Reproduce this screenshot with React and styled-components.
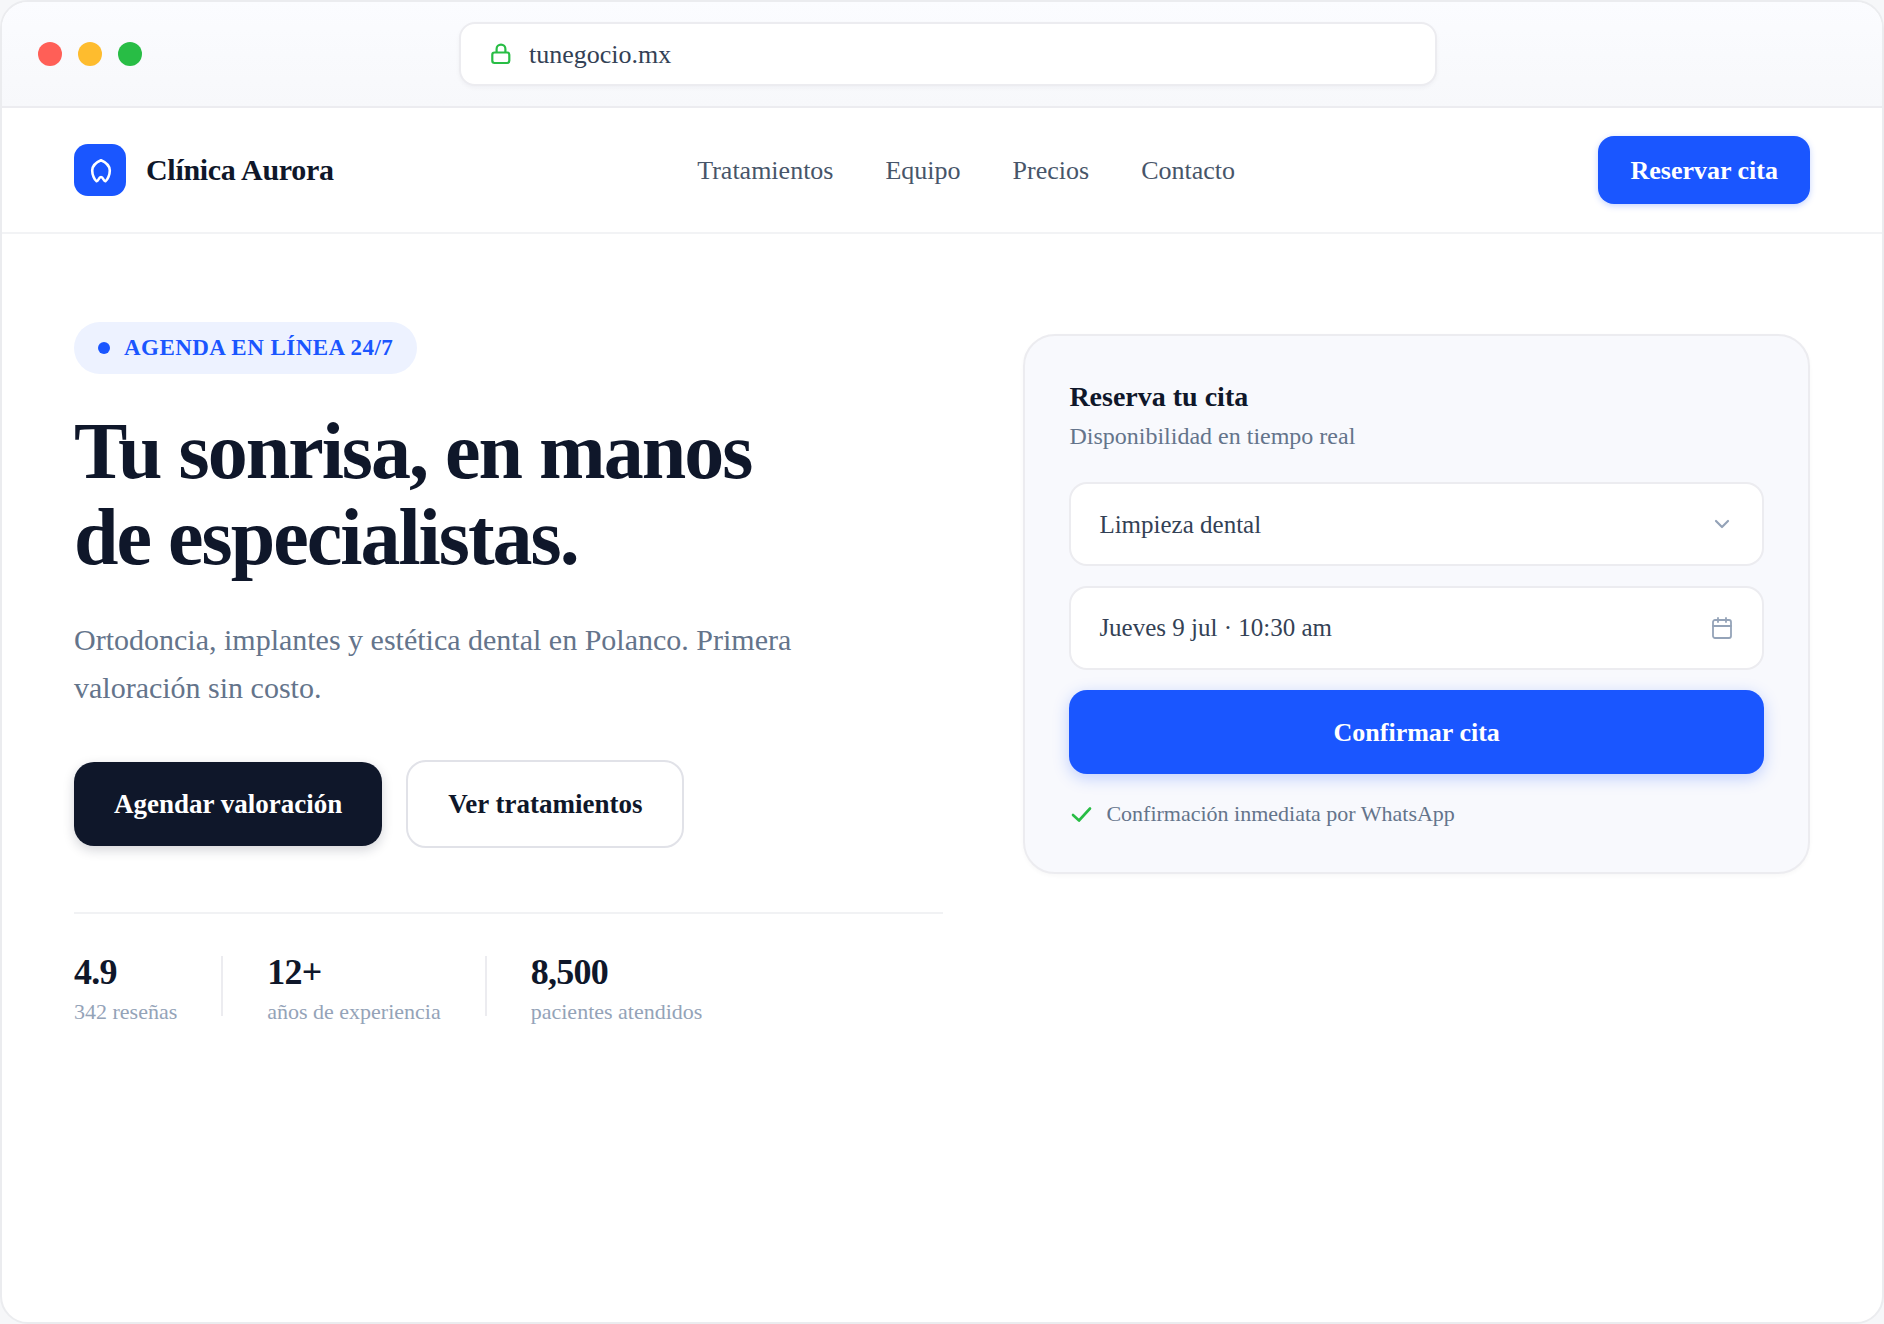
import React from "react";
import styled, { createGlobalStyle } from "styled-components";

const color = {
  blue: "#1a56ff",
  ink: "#0f172a",
  text: "#334155",
  nav: "#475569",
  muted: "#64748b",
  faint: "#94a3b8",
  line: "#ececf0",
  panel: "#f8f9fd",
  green: "#28bd45",
};

const GlobalStyle = createGlobalStyle`
  *, *::before, *::after { box-sizing: border-box; }
  body {
    margin: 0;
    background: #f6f7f9;
    color: ${color.ink};
    font-family: "Liberation Serif", "Times New Roman", serif;
    -webkit-font-smoothing: antialiased;
  }
  h1, h2, p, dl, dt, dd { margin: 0; }
  button, input, select { font-family: inherit; }
`;

const Frame = styled.div`
  display: flex;
  flex-direction: column;
  min-height: 100vh;
  overflow: hidden;
  background: #fff;
  border: 2px solid #ebecef;
  border-radius: 28px;
`;

const Chrome = styled.div`
  display: flex;
  align-items: center;
  padding: 20px 128px 20px 36px;
  background: linear-gradient(#fbfcff, #f7f8fb);
  border-bottom: 2px solid ${color.line};
`;

const Lights = styled.div`
  display: flex;
  gap: 16px;
`;

const Light = styled.span`
  width: 24px;
  height: 24px;
  border-radius: 50%;
  background: ${(p) => p.$color};
`;

const Address = styled.label`
  display: flex;
  align-items: center;
  gap: 16px;
  width: 57%;
  height: 64px;
  margin: 0 auto;
  padding: 0 28px;
  background: #fff;
  border: 2px solid ${color.line};
  border-radius: 16px;
  box-shadow: 0 2px 4px rgba(15, 23, 42, 0.04);
`;

const AddressInput = styled.input`
  flex: 1;
  min-width: 0;
  padding: 2px 0 0;
  border: 0;
  outline: 0;
  background: transparent;
  color: ${color.text};
  font-size: 26px;
`;

const Nav = styled.header`
  display: flex;
  align-items: center;
  justify-content: space-between;
  padding: 28px 72px;
  border-bottom: 2px solid #f2f3f5;
`;

const Brand = styled.a`
  display: flex;
  align-items: center;
  gap: 20px;
  color: ${color.ink};
  font-size: 30px;
  font-weight: 700;
  letter-spacing: -0.01em;
  text-decoration: none;
`;

const BrandMark = styled.span`
  display: grid;
  place-items: center;
  width: 52px;
  height: 52px;
  border-radius: 14px;
  background: ${color.blue};
`;

const Links = styled.nav`
  display: flex;
  gap: 52px;
`;

const NavLink = styled.a`
  padding-top: 2px;
  color: ${color.nav};
  font-size: 26px;
  text-decoration: none;
`;

const Button = styled.button`
  height: 84px;
  padding: 0 40px;
  border: 0;
  border-radius: 20px;
  background: ${color.ink};
  color: #fff;
  font-size: 27px;
  font-weight: 700;
  cursor: pointer;
  box-shadow: 0 4px 12px rgba(15, 23, 42, 0.18);
`;

const NavButton = styled(Button)`
  height: 68px;
  padding: 2px 32px 0;
  border-radius: 16px;
  background: ${color.blue};
  font-size: 26px;
  box-shadow: 0 2px 6px rgba(26, 86, 255, 0.25);
`;

const OutlineButton = styled(Button)`
  height: 88px;
  border: 2px solid #e1e2e8;
  background: #fff;
  color: ${color.ink};
  box-shadow: none;
`;

const ConfirmButton = styled(Button)`
  width: 100%;
  padding: 2px 32px 0;
  border-radius: 18px;
  background: ${color.blue};
  font-size: 26px;
  box-shadow: 0 4px 16px rgba(26, 86, 255, 0.26);
`;

const Hero = styled.main`
  display: grid;
  grid-template-columns: 21fr 19fr;
  gap: 80px;
  align-items: start;
  padding: 88px 72px;
`;

const Pill = styled.div`
  display: inline-flex;
  align-items: center;
  gap: 14px;
  height: 52px;
  padding: 0 24px;
  border-radius: 26px;
  background: #edf2ff;
  color: ${color.blue};
  font-size: 23px;
  font-weight: 700;
  letter-spacing: 0.02em;
`;

const Dot = styled.span`
  width: 12px;
  height: 12px;
  border-radius: 50%;
  background: currentColor;
`;

const Title = styled.h1`
  margin-top: 34px;
  font-size: 80px;
  line-height: 86px;
  font-weight: 700;
  letter-spacing: -2px;
`;

const Lead = styled.p`
  max-width: 760px;
  margin-top: 36px;
  color: ${color.muted};
  font-size: 30px;
  line-height: 48px;
`;

const Actions = styled.div`
  display: flex;
  align-items: center;
  gap: 24px;
  margin-top: 48px;
`;

const Stats = styled.dl`
  display: flex;
  align-items: center;
  gap: 44px;
  margin-top: 64px;
  padding-top: 34px;
  border-top: 2px solid #f1f2f4;
`;

const Stat = styled.div`
  display: flex;
  flex-direction: column-reverse;
  gap: 4px;
`;

const StatLabel = styled.dt`
  color: ${color.faint};
  font-size: 22px;
  line-height: 24px;
`;

const StatValue = styled.dd`
  font-size: 36px;
  line-height: 48px;
  font-weight: 700;
  letter-spacing: -0.02em;
`;

const Divider = styled.span`
  width: 2px;
  height: 60px;
  background: ${color.line};
`;

const Card = styled.form`
  display: flex;
  flex-direction: column;
  gap: 20px;
  margin-top: 12px;
  padding: 44px;
  background: ${color.panel};
  border: 2px solid ${color.line};
  border-radius: 32px;
  box-shadow: 0 2px 4px rgba(15, 23, 42, 0.03);
`;

const CardHead = styled.div`
  display: grid;
  gap: 4px;
  margin-bottom: 8px;
`;

const CardTitle = styled.h2`
  font-size: 28px;
  line-height: 34px;
`;

const CardText = styled.p`
  color: ${color.muted};
  font-size: 24px;
  line-height: 36px;
`;

const Field = styled.label`
  display: flex;
  align-items: center;
  height: 84px;
  padding: 0 28px;
  background: #fff;
  border: 2px solid ${color.line};
  border-radius: 18px;
`;

const control = `
  flex: 1;
  min-width: 0;
  padding: 0;
  border: 0;
  outline: 0;
  appearance: none;
  background: transparent;
  color: ${color.text};
  font-size: 25px;
`;

const Select = styled.select`${control}`;
const Input = styled.input`${control}`;

const Note = styled.p`
  display: flex;
  align-items: center;
  gap: 13px;
  margin-top: 6px;
  color: ${color.muted};
  font-size: 22px;
  line-height: 28px;
`;

const LockIcon = () => (
  <svg width="24" height="24" viewBox="0 0 24 24" fill="none" stroke={color.green} strokeWidth="2.2" aria-hidden="true">
    <rect x="3.300" y="10.500" width="17" height="10.500" rx="2.200" />
    <path d="M7.600 10.500V7a4.400 4.400 0 0 1 8.800 0v3.500" />
  </svg>
);

const ToothIcon = () => (
  <svg width="28" height="28" viewBox="0 0 28 28" fill="none" stroke="#fff" strokeWidth="2.6" strokeLinecap="round" strokeLinejoin="round" aria-hidden="true">
    <path d="M15 4.200C11.500 5.700 6.200 8 6.200 14.500c0 4.500 2.300 9.500 4.300 10.700 1.800 0.800 2-4.200 4.500-4.200s2.700 5 4.500 4.200c2-1.200 4.300-6.200 4.300-10.700C23.800 8 18.500 5.700 15 4.200z" />
  </svg>
);

const ChevronIcon = () => (
  <svg width="24" height="24" viewBox="0 0 24 24" fill="none" stroke={color.faint} strokeWidth="2.2" strokeLinecap="round" strokeLinejoin="round" aria-hidden="true">
    <path d="M6 9l6 6 6-6" />
  </svg>
);

const CalendarIcon = () => (
  <svg width="24" height="24" viewBox="0 0 24 24" fill="none" stroke={color.faint} strokeWidth="1.8" strokeLinecap="round" aria-hidden="true">
    <rect x="3" y="4" width="18" height="18" rx="2" />
    <path d="M3 10h18M8 2v4M16 2v4" />
  </svg>
);

const CheckIcon = () => (
  <svg width="24" height="24" viewBox="0 0 24 24" fill="none" stroke={color.green} strokeWidth="2.6" strokeLinecap="round" strokeLinejoin="round" aria-hidden="true">
    <path d="M21 6.500L10 18.500l-6-5.500" />
  </svg>
);

const links = ["Tratamientos", "Equipo", "Precios", "Contacto"];

const stats = [
  { value: "4.9", label: "342 reseñas" },
  { value: "12+", label: "años de experiencia" },
  { value: "8,500", label: "pacientes atendidos" },
];

export default function App() {
  return (
    <>
      <GlobalStyle />
      <Frame>
        <Chrome>
          <Lights>
            <Light $color="#ff5f57" />
            <Light $color="#febc2e" />
            <Light $color="#28bd45" />
          </Lights>
          <Address>
            <LockIcon />
            <AddressInput type="text" aria-label="Dirección" defaultValue="tunegocio.mx" />
          </Address>
        </Chrome>

        <Nav>
          <Brand href="#inicio">
            <BrandMark><ToothIcon /></BrandMark>
            Clínica Aurora
          </Brand>
          <Links>
            {links.map((name) => (
              <NavLink key={name} href={`#${name.toLowerCase()}`}>{name}</NavLink>
            ))}
          </Links>
          <NavButton type="button">Reservar cita</NavButton>
        </Nav>

        <Hero>
          <section>
            <Pill><Dot />AGENDA EN LÍNEA 24/7</Pill>
            <Title>Tu sonrisa, en manos<br />de especialistas.</Title>
            <Lead>Ortodoncia, implantes y estética dental en Polanco. Primera valoración sin costo.</Lead>
            <Actions>
              <Button type="button">Agendar valoración</Button>
              <OutlineButton type="button">Ver tratamientos</OutlineButton>
            </Actions>
            <Stats>
              {stats.map((s, i) => (
                <React.Fragment key={s.label}>
                  {i > 0 && <Divider />}
                  <Stat>
                    <StatLabel>{s.label}</StatLabel>
                    <StatValue>{s.value}</StatValue>
                  </Stat>
                </React.Fragment>
              ))}
            </Stats>
          </section>

          <Card onSubmit={(e) => e.preventDefault()}>
            <CardHead>
              <CardTitle>Reserva tu cita</CardTitle>
              <CardText>Disponibilidad en tiempo real</CardText>
            </CardHead>
            <Field>
              <Select aria-label="Tratamiento" defaultValue="limpieza">
                <option value="limpieza">Limpieza dental</option>
              </Select>
              <ChevronIcon />
            </Field>
            <Field>
              <Input type="text" aria-label="Fecha y hora" defaultValue="Jueves 9 jul · 10:30 am" />
              <CalendarIcon />
            </Field>
            <ConfirmButton type="submit">Confirmar cita</ConfirmButton>
            <Note><CheckIcon />Confirmación inmediata por WhatsApp</Note>
          </Card>
        </Hero>
      </Frame>
    </>
  );
}
